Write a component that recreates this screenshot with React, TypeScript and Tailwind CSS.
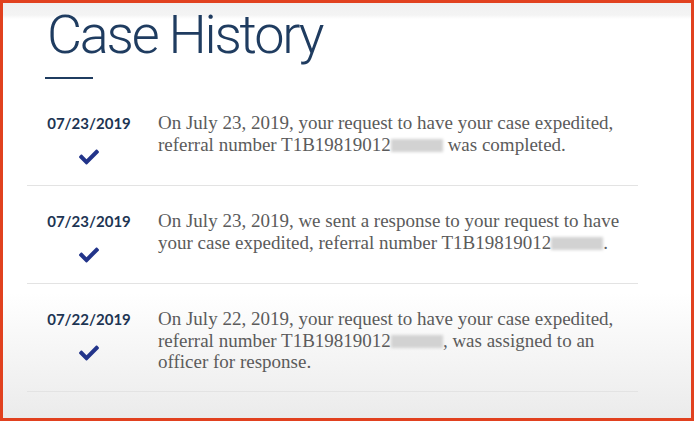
import { FaCheck } from 'react-icons/fa';

type Entry = {
  date: string;
  before: string;
  after: string;
};

const entries: Entry[] = [
  {
    date: '07/23/2019',
    before: 'On July 23, 2019, your request to have your case expedited, referral number T1B19819012',
    after: ' was completed.',
  },
  {
    date: '07/23/2019',
    before: 'On July 23, 2019, we sent a response to your request to have your case expedited, referral number T1B19819012',
    after: '.',
  },
  {
    date: '07/22/2019',
    before: 'On July 22, 2019, your request to have your case expedited, referral number T1B19819012',
    after: ', was assigned to an officer for response.',
  },
];

function Redacted() {
  return (
    <span className="inline-block w-[52px] h-[13px] align-[-1px] bg-[#d2d2d2] blur-[1.5px]" />
  );
}

function HistoryRow({ entry }: { entry: Entry }) {
  return (
    <div className="flex border-b border-[#e3e3e3] pt-[25px] pb-[18px]">
      {/* Date + status */}
      <div className="w-[124px] shrink-0 flex flex-col items-center">
        <div
          className="text-[15px] leading-[20px] font-bold text-[#1d3553]"
          style={{ fontFamily: 'Lato, "Open Sans", sans-serif' }}
        >
          {entry.date}
        </div>
        <FaCheck className="mt-[14px] w-[26px] h-[20px] text-[#22348a]" />
      </div>

      {/* Description */}
      <p
        className="ml-[7px] w-[474px] -mt-[1px] text-[19px] leading-[21.5px] text-[#5b5b5b]"
        style={{ fontFamily: '"Liberation Serif", Georgia, serif' }}
      >
        {entry.before}
        <Redacted />
        {entry.after}
      </p>
    </div>
  );
}

export default function App() {
  return (
    <div className="w-[694px] h-[421px] border-[3px] border-[#e1411f] overflow-hidden bg-[linear-gradient(to_bottom,#f0f0f0_0px,#f4f4f4_12px,#ffffff_16px,#ffffff_290px,#ebebeb_100%)]">
      {/* Heading */}
      <div className="pl-[42px] pt-[3px]">
        <h1
          className="pl-[2px] text-[54px] leading-[57px] font-light tracking-[-2.2px] text-[#1f3c60]"
          style={{ fontFamily: 'Roboto, Lato, sans-serif' }}
        >
          Case History
        </h1>
        <div className="mt-[14px] w-[48px] h-[2px] bg-[#1f3c60]" />
      </div>

      {/* Entries */}
      <div className="ml-[24px] w-[611px] mt-[9px]">
        {entries.map((e, i) => (
          <HistoryRow key={i} entry={e} />
        ))}
      </div>
    </div>
  );
}
